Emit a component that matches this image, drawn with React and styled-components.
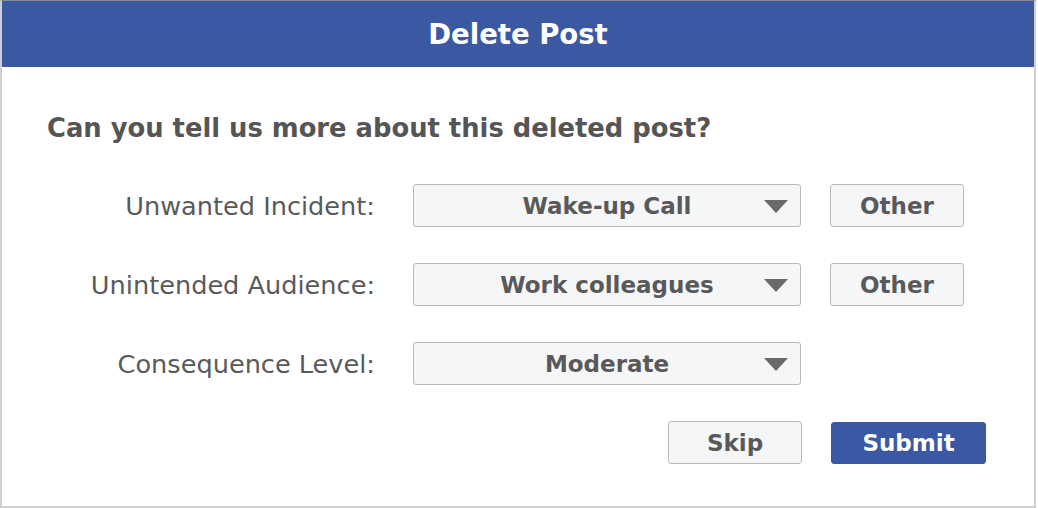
import styled, { createGlobalStyle } from 'styled-components'

const GlobalStyle = createGlobalStyle`
  html, body {
    margin: 0;
    padding: 0;
    background: #ffffff;
  }
  body {
    font-family: "DejaVu Sans", Verdana, sans-serif;
  }
`

const Dialog = styled.div`
  width: 1036px;
  height: 508px;
  box-sizing: border-box;
  border: 2px solid #cfcfcf;
  border-top: 1px solid #8a8a8a;
  background: #ffffff;
  display: flex;
  flex-direction: column;
`

const Header = styled.div`
  height: 66px;
  background: #3b59a2;
  color: #ffffff;
  display: flex;
  align-items: center;
  justify-content: center;
  font-size: 27.5px;
  font-weight: bold;
  flex-shrink: 0;
`

const Body = styled.div`
  padding: 43px 0 0 45px;
  display: flex;
  flex-direction: column;
`

const Question = styled.h2`
  margin: 0 0 38px;
  font-size: 25.8px;
  font-weight: bold;
  color: #555555;
  line-height: 36px;
`

const Rows = styled.div`
  display: flex;
  flex-direction: column;
  gap: 36px;
`

const Row = styled.div`
  display: flex;
  align-items: center;
  height: 43px;
`

const Label = styled.div`
  width: 328px;
  text-align: right;
  font-size: 25.6px;
  color: #5a5a5a;
  margin-right: 38px;
`

const Select = styled.div`
  position: relative;
  width: 388px;
  height: 43px;
  box-sizing: border-box;
  border: 1px solid #b9b9b9;
  border-radius: 3px;
  background: #f5f6f8;
  display: flex;
  align-items: center;
  justify-content: center;
  font-size: 23px;
  font-weight: bold;
  color: #595959;
`

const Arrow = styled.span`
  position: absolute;
  right: 12px;
  top: 15px;
  width: 0;
  height: 0;
  border-left: 12px solid transparent;
  border-right: 12px solid transparent;
  border-top: 13px solid #6a6a6a;
`

const Button = styled.button`
  width: ${p => p.$w}px;
  height: ${p => p.$h || 43}px;
  box-sizing: border-box;
  border-radius: 3px;
  border: 1px solid ${p => (p.$primary ? '#3b59a2' : '#b9b9b9')};
  background: ${p => (p.$primary ? '#3b59a2' : '#f5f6f8')};
  color: ${p => (p.$primary ? '#ffffff' : '#595959')};
  font-family: inherit;
  font-size: 23px;
  font-weight: bold;
  padding: 0;
  margin-left: ${p => p.$ml || 0}px;
  cursor: pointer;
`

const Footer = styled.div`
  display: flex;
  align-items: center;
  margin-top: 36px;
  padding-left: 621px;
`

const rows = [
  { label: 'Unwanted Incident:', value: 'Wake-up Call', other: true },
  { label: 'Unintended Audience:', value: 'Work colleagues', other: true },
  { label: 'Consequence Level:', value: 'Moderate', other: false },
]

export default function App() {
  return (
    <>
      <GlobalStyle />
      <Dialog>
        <Header>Delete Post</Header>
        <Body>
          <Question>Can you tell us more about this deleted post?</Question>
          <Rows>
            {rows.map(r => (
              <Row key={r.label}>
                <Label>{r.label}</Label>
                <Select>
                  {r.value}
                  <Arrow />
                </Select>
                {r.other && <Button $w={134} $ml={29}>Other</Button>}
              </Row>
            ))}
          </Rows>
          <Footer>
            <Button $w={134}>Skip</Button>
            <Button $w={155} $h={42} $ml={29} $primary>Submit</Button>
          </Footer>
        </Body>
      </Dialog>
    </>
  )
}
